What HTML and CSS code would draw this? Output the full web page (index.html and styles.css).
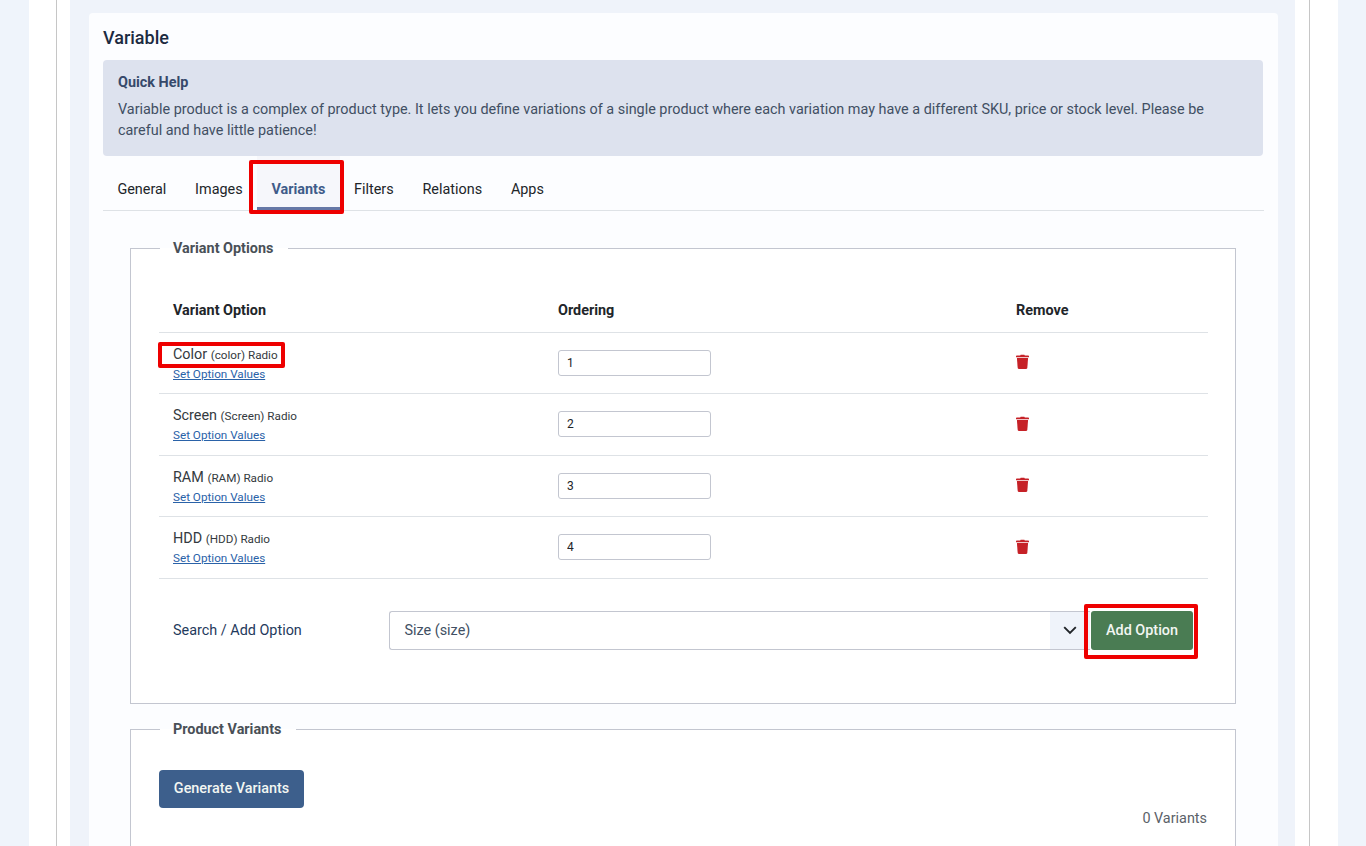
FILE: index.html
```html
<!DOCTYPE html>
<html lang="en">
<head>
    <meta charset="UTF-8">
    <meta name="viewport" content="width=device-width, initial-scale=1.0">
    <title>Variable Product</title>
    <link rel="stylesheet" href="styles.css">
</head>
<body>
    <div class="wrapper">
        <div class="frame">
            <div class="panel">
                <div class="card">
                    <h1>Variable</h1>

                    <div class="quick-help">
                        <strong>Quick Help</strong>
                        <p>Variable product is a complex of product type. It lets you define variations of a single product where each variation may have a different SKU, price or stock level. Please be careful and have little patience!</p>
                    </div>

                    <div class="tabs">
                        <a class="tab">General</a>
                        <a class="tab">Images</a>
                        <a class="tab active">Variants<span class="marker marker-tab"></span></a>
                        <a class="tab">Filters</a>
                        <a class="tab">Relations</a>
                        <a class="tab">Apps</a>
                    </div>

                    <fieldset class="group group-options">
                        <legend>Variant Options</legend>
                        <table class="options">
                            <thead>
                                <tr>
                                    <th class="col-name">Variant Option</th>
                                    <th class="col-order">Ordering</th>
                                    <th>Remove</th>
                                </tr>
                            </thead>
                            <tbody>
                                <tr>
                                    <td>
                                        <span class="opt-name">Color <small>(color) Radio</small><span class="marker marker-name"></span></span>
                                        <a class="opt-link">Set Option Values</a>
                                    </td>
                                    <td><input class="order" value="1"></td>
                                    <td><svg class="trash" viewBox="0 0 14 16"><path d="M5 0.6h4l.5 1H13.2c.4 0 .8.3.8.8v.9H0v-.9c0-.5.4-.8.8-.8h3.7z"/><path d="M1 4.3h12l-.8 10.4c-.1.8-.6 1.3-1.4 1.3H3.2c-.8 0-1.3-.5-1.4-1.3z"/></svg></td>
                                </tr>
                                <tr>
                                    <td>
                                        <span class="opt-name">Screen <small>(Screen) Radio</small></span>
                                        <a class="opt-link">Set Option Values</a>
                                    </td>
                                    <td><input class="order" value="2"></td>
                                    <td><svg class="trash" viewBox="0 0 14 16"><path d="M5 0.6h4l.5 1H13.2c.4 0 .8.3.8.8v.9H0v-.9c0-.5.4-.8.8-.8h3.7z"/><path d="M1 4.3h12l-.8 10.4c-.1.8-.6 1.3-1.4 1.3H3.2c-.8 0-1.3-.5-1.4-1.3z"/></svg></td>
                                </tr>
                                <tr>
                                    <td>
                                        <span class="opt-name">RAM <small>(RAM) Radio</small></span>
                                        <a class="opt-link">Set Option Values</a>
                                    </td>
                                    <td><input class="order" value="3"></td>
                                    <td><svg class="trash" viewBox="0 0 14 16"><path d="M5 0.6h4l.5 1H13.2c.4 0 .8.3.8.8v.9H0v-.9c0-.5.4-.8.8-.8h3.7z"/><path d="M1 4.3h12l-.8 10.4c-.1.8-.6 1.3-1.4 1.3H3.2c-.8 0-1.3-.5-1.4-1.3z"/></svg></td>
                                </tr>
                                <tr>
                                    <td>
                                        <span class="opt-name">HDD <small>(HDD) Radio</small></span>
                                        <a class="opt-link">Set Option Values</a>
                                    </td>
                                    <td><input class="order" value="4"></td>
                                    <td><svg class="trash" viewBox="0 0 14 16"><path d="M5 0.6h4l.5 1H13.2c.4 0 .8.3.8.8v.9H0v-.9c0-.5.4-.8.8-.8h3.7z"/><path d="M1 4.3h12l-.8 10.4c-.1.8-.6 1.3-1.4 1.3H3.2c-.8 0-1.3-.5-1.4-1.3z"/></svg></td>
                                </tr>
                            </tbody>
                        </table>

                        <div class="add-row">
                            <label>Search / Add Option</label>
                            <div class="select">
                                <span class="select-value">Size (size)</span>
                                <span class="select-arrow">
                                    <svg viewBox="0 0 14 9" width="14" height="9"><path d="M1.2 1.2 7 7l5.8-5.8" fill="none" stroke="#212529" stroke-width="1.9"/></svg>
                                </span>
                            </div>
                            <button class="btn btn-green">Add Option<span class="marker marker-btn"></span></button>
                        </div>
                    </fieldset>

                    <fieldset class="group group-variants">
                        <legend>Product Variants</legend>
                        <button class="btn btn-blue">Generate Variants</button>
                        <div class="count">0 Variants</div>
                    </fieldset>
                </div>
            </div>
        </div>
    </div>
</body>
</html>
```

FILE: styles.css
```css
* {
    box-sizing: border-box;
}
html, body {
    height: 846px;
    overflow: hidden;
}
body {
    margin: 0;
    padding: 0 28px 0 29px;
    background: #eff4fb;
    font-family: Roboto, sans-serif;
    font-size: 14.4px;
    color: #212529;
}
.wrapper {
    background: #fff;
    height: 846px;
    padding: 0 28px 0 27px;
    overflow: hidden;
}
.frame {
    height: 846px;
    border-left: 1px solid #c6c6c6;
    border-right: 1px solid #c6c6c6;
    padding: 0 14px 0 13px;
}
.panel {
    height: 846px;
    background: #eff3fa;
    padding: 13px 17px 0 19px;
    overflow: hidden;
}
.card {
    background: #fcfdff;
    height: 900px;
    padding: 13px 15px 13px 14px;
    border-radius: 4px;
}
h1 {
    margin: 0 0 11px;
    font-size: 18px;
    line-height: 23px;
    font-weight: 500;
    color: #1c2b41;
}
.quick-help {
    background: #dde2ee;
    border-radius: 4px;
    padding: 14px 15px 15px;
    height: 96px;
    color: #414f63;
}
.quick-help strong {
    display: block;
    font-weight: 700;
    font-size: 14.4px;
    line-height: 18px;
    color: #36496a;
    margin-bottom: 6.5px;
}
.quick-help p {
    margin: 0;
    line-height: 21.6px;
}
.tabs {
    display: flex;
    height: 55px;
    margin-right: -1px;
    border-bottom: 1px solid #dee2e6;
    color: #212529;
}
.tab {
    position: relative;
    padding: 25px 14.4px 0;
    line-height: 18px;
    height: 54px;
}
.tab.active {
    color: #3f5c8a;
    font-weight: 700;
    background: #f6f7fb;
    border-bottom: 3px solid #6577a6;
}
.marker {
    position: absolute;
    border: 4px solid #ee0000;
    border-radius: 2px;
}
.marker-tab {
    left: -8px;
    right: -4px;
    top: 4px;
    bottom: -7px;
}
.marker-name {
    left: -15px;
    right: -7px;
    top: -4px;
    bottom: -4px;
}
.marker-btn {
    left: -7px;
    right: -5px;
    top: -7px;
    bottom: -9px;
}
.group {
    margin: 0 0 0 27px;
    width: 1106px;
    padding: 0 27px 0 28px;
    border: 1px solid #c3c6d0;
    background: #fff;
}
.group legend {
    margin-left: 1px;
    padding: 2px 15px 0 13px;
    font-weight: 700;
    line-height: 18px;
    color: #495057;
}
.group-options {
    margin-top: 27px;
    height: 466px;
}
.group-variants {
    margin-top: 15px;
    height: 200px;
}
.options {
    width: 1049px;
    border-collapse: collapse;
    margin-top: 28px;
}
.options th {
    text-align: left;
    font-weight: 700;
    height: 46px;
    padding: 4px 14px 0;
    border-bottom: 1px solid #dee2e6;
}
.options .col-name {
    width: 385px;
}
.options .col-order {
    width: 458px;
}
.options td {
    height: 61.5px;
    padding: 0 14px;
    border-bottom: 1px solid #dee2e6;
    vertical-align: middle;
}
.opt-name {
    position: relative;
    display: inline-block;
    margin-top: 2px;
    line-height: 17px;
    color: #343a40;
}
.opt-name small {
    font-size: 11.7px;
}
.opt-link {
    display: block;
    margin-top: 3px;
    font-size: 11.7px;
    line-height: 15px;
    color: #2a62a8;
    text-decoration: underline;
}
.order {
    display: block;
    width: 153px;
    height: 26px;
    padding: 0 8px;
    border: 1px solid #c3c6d0;
    border-radius: 3px;
    font-family: Roboto, sans-serif;
    font-size: 12px;
    color: #212529;
}
.trash {
    display: block;
    width: 13px;
    height: 15px;
    margin-bottom: 2px;
    fill: #c62127;
}
.add-row {
    display: flex;
    align-items: center;
    margin-top: 32px;
    padding-left: 14px;
}
.add-row label {
    width: 216px;
    color: #1f3a5c;
}
.select {
    display: flex;
    width: 701px;
    height: 39px;
    margin-right: 1px;
    border: 1px solid #c3c6d0;
    border-right: 0;
    border-radius: 3px 0 0 3px;
}
.select-value {
    flex: 1;
    padding-left: 14.5px;
    line-height: 37px;
    color: #414f63;
}
.select-arrow {
    width: 40px;
    display: flex;
    align-items: center;
    justify-content: center;
    background: #eff3fa;
}
.btn {
    position: relative;
    height: 39px;
    border: none;
    border-radius: 3px;
    color: #f2f6f2;
    font-family: Roboto, sans-serif;
    font-size: 14.4px;
    font-weight: 500;
}
.btn-green {
    width: 102px;
    background: #4a7c53;
}
.btn-blue {
    display: block;
    width: 145px;
    height: 38px;
    margin-top: 31px;
    padding-bottom: 2px;
    background: #3d5f8c;
    border-radius: 4px;
}
.count {
    text-align: right;
    margin-top: 2px;
    padding-right: 1px;
    line-height: 18px;
    color: #5b6168;
}
```
